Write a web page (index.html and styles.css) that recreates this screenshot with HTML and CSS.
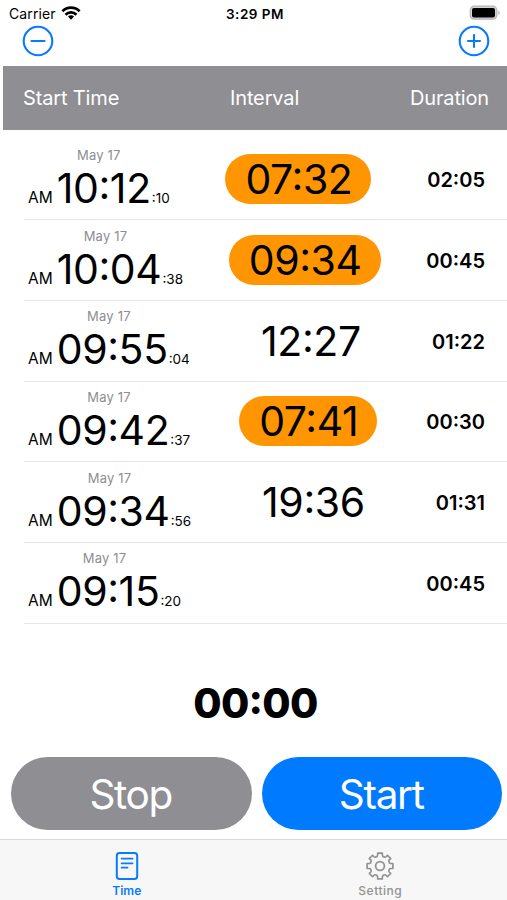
FILE: index.html
```html
<!DOCTYPE html>
<html lang="en">

<head>
    <meta charset="UTF-8">
    <meta name="viewport" content="width=device-width, initial-scale=1.0">
    <title>Interval Timer</title>
    <link rel="stylesheet" href="styles.css">
</head>

<body>
    <div class="status-bar">
        <div class="carrier">
            <span>Carrier</span>
            <svg width="20" height="14" viewBox="0 0 20 14">
                <g fill="none" stroke="#000" stroke-width="2.7">
                    <path d="M1.4 5.2a12.2 12.2 0 0 1 17.2 0" />
                    <path d="M4.5 8.7a7.8 7.8 0 0 1 11 0" />
                </g>
                <path d="M10 13.8l-3-3.2a4.2 4.2 0 0 1 6 0z" />
            </svg>
        </div>
        <div class="clock">3:29 PM</div>
        <div class="battery">
            <svg width="32" height="16" viewBox="0 0 32 16">
                <rect x="1.2" y="1.2" width="26.6" height="13" rx="4" fill="#d4d4d4" stroke="#b5b5b5" stroke-width="1.2" />
                <rect x="3" y="3" width="23" height="9.4" rx="2" />
                <path d="M29.3 5.2q3 2.5 0 5z" fill="#b5b5b5" />
            </svg>
        </div>
    </div>

    <div class="toolbar">
        <svg width="32" height="32" viewBox="0 0 32 32">
            <circle cx="16" cy="16" r="14.3" />
            <path d="M9.5 16h13" />
        </svg>
        <svg width="32" height="32" viewBox="0 0 32 32">
            <circle cx="16" cy="16" r="14.3" />
            <path d="M10 16h12M16 10v12" />
        </svg>
    </div>

    <div class="list-header">
        <span>Start Time</span>
        <span>Interval</span>
        <span>Duration</span>
    </div>

    <ul class="list">
        <li class="row">
            <div class="start">
                <div class="date">May 17</div>
                <div class="time"><span class="ampm">AM</span><span class="big">10:12</span><span class="sec">:10</span></div>
            </div>
            <div class="interval pill">07:32</div>
            <div class="duration">02:05</div>
        </li>
        <li class="row">
            <div class="start">
                <div class="date">May 17</div>
                <div class="time"><span class="ampm">AM</span><span class="big">10:04</span><span class="sec">:38</span></div>
            </div>
            <div class="interval pill">09:34</div>
            <div class="duration">00:45</div>
        </li>
        <li class="row">
            <div class="start">
                <div class="date">May 17</div>
                <div class="time"><span class="ampm">AM</span><span class="big">09:55</span><span class="sec">:04</span></div>
            </div>
            <div class="interval">12:27</div>
            <div class="duration">01:22</div>
        </li>
        <li class="row">
            <div class="start">
                <div class="date">May 17</div>
                <div class="time"><span class="ampm">AM</span><span class="big">09:42</span><span class="sec">:37</span></div>
            </div>
            <div class="interval pill">07:41</div>
            <div class="duration">00:30</div>
        </li>
        <li class="row">
            <div class="start">
                <div class="date">May 17</div>
                <div class="time"><span class="ampm">AM</span><span class="big">09:34</span><span class="sec">:56</span></div>
            </div>
            <div class="interval">19:36</div>
            <div class="duration">01:31</div>
        </li>
        <li class="row">
            <div class="start">
                <div class="date">May 17</div>
                <div class="time"><span class="ampm">AM</span><span class="big">09:15</span><span class="sec">:20</span></div>
            </div>
            <div class="duration">00:45</div>
        </li>
    </ul>

    <div class="timer">00:00</div>

    <div class="buttons">
        <button class="btn stop">Stop</button>
        <button class="btn go">Start</button>
    </div>

    <div class="tab-bar">
        <div class="tab active">
            <svg width="30" height="30" viewBox="-15 -15 30 30">
                <rect x="-10.2" y="-13" width="20.4" height="26" rx="2.8" stroke-width="2" />
                <path d="M-5.4-7.4h11M-5.4-2.7h11M-5.4 1.6h6" stroke-width="1.7" />
            </svg>
            <span>Time</span>
        </div>
        <div class="tab">
            <svg width="30" height="30" viewBox="-15 -15 30 30">
                <path stroke-width="1.7" d="M9.6-2.8 Q10-2.3 12.9-2.3V2.3Q10 2.3 9.6 2.8L8.8 4.8Q8.5 5.5 10.7 7.5L7.5 10.7Q5.5 8.5 4.8 8.8L2.8 9.6Q2.3 10 2.3 12.9H-2.3Q-2.3 10-2.8 9.6L-4.8 8.8Q-5.5 8.5-7.5 10.7L-10.7 7.5Q-8.5 5.5-8.8 4.8L-9.6 2.8Q-10 2.3-12.9 2.3V-2.3Q-10-2.3-9.6-2.8L-8.8-4.8Q-8.5-5.5-10.7-7.5L-7.5-10.7Q-5.5-8.5-4.8-8.8L-2.8-9.6Q-2.3-10-2.3-12.9H2.3Q2.3-10 2.8-9.6L4.8-8.8Q5.5-8.5 7.5-10.7L10.7-7.5Q8.5-5.5 8.8-4.8Z" />
                <circle r="4.4" stroke-width="1.8" />
            </svg>
            <span>Setting</span>
        </div>
    </div>
</body>

</html>
```

FILE: styles.css
```css
* {
    box-sizing: border-box;
}

body {
    margin: 0;
    height: 900px;
    display: flex;
    flex-direction: column;
    background: #fff;
    color: #000;
    font-family: Inter, "Liberation Sans", sans-serif;
    overflow: hidden;
}

.status-bar {
    display: grid;
    grid-template-columns: 1fr auto 1fr;
    align-items: center;
    height: 25px;
    padding: 2px 6px 0 9px;
    font-size: 14px;
}

.carrier {
    display: flex;
    align-items: center;
    gap: 5px;
    letter-spacing: 0.1px;
}

.carrier svg {
    margin-top: -2px;
}

.clock {
    font-weight: 600;
    font-size: 13.5px;
    letter-spacing: 0.5px;
}

.battery {
    display: flex;
    justify-content: flex-end;
}

.battery svg {
    margin-top: -1px;
}

.toolbar {
    display: flex;
    justify-content: space-between;
    height: 41px;
    padding: 0 17px 0 22px;
}

.toolbar svg {
    fill: none;
    stroke: #087aff;
    stroke-width: 2.1;
    stroke-linecap: round;
}

.list-header {
    display: flex;
    justify-content: space-between;
    align-items: center;
    height: 63.5px;
    margin-left: 3px;
    padding: 0 18px 0 20px;
    background: #8e8e93;
    color: #fff;
    font-size: 20px;
    letter-spacing: -0.15px;
}

.list {
    list-style: none;
    margin: 10px 0 0 24px;
    padding: 0;
}

.row {
    display: flex;
    justify-content: space-between;
    align-items: center;
    height: 80.7px;
    padding: 0 22px 0 4px;
    border-bottom: 1.5px solid #e6e6e8;
}

.start {
    display: flex;
    flex-direction: column;
    align-items: center;
    padding-top: 10px;
}

.date {
    color: #8e8e93;
    font-size: 13px;
    line-height: 17px;
    letter-spacing: 0.2px;
}

.time {
    display: flex;
    align-items: baseline;
    line-height: 48px;
}

.ampm {
    margin-right: 4px;
    font-size: 15.5px;
}

/* "case" lifts the colon to the middle of the digits */
.big,
.interval {
    font-size: 41px;
    letter-spacing: -0.4px;
    font-feature-settings: "case";
}

.sec {
    margin-left: 1px;
    font-size: 13.5px;
}

.interval {
    line-height: 50px;
}

.pill {
    padding: 0 19px 0 20px;
    border-radius: 25px;
    background: #ff9500;
}

.duration {
    padding-top: 2px;
    font-size: 20px;
    font-weight: 600;
    font-feature-settings: "case";
}

.timer {
    height: 133px;
    padding-top: 12px;
    font-size: 41px;
    font-weight: 800;
    line-height: 134px;
    letter-spacing: -0.7px;
    text-align: center;
    padding-left: 4px;
    font-feature-settings: "case";
}

.buttons {
    display: flex;
    gap: 10px;
    height: 73.5px;
    padding: 0 5px 0 11px;
}

.btn {
    flex: 1;
    padding: 2px 1px 0 0;
    border: none;
    border-radius: 37px;
    color: #fff;
    font-family: inherit;
    font-size: 40.5px;
    letter-spacing: -1.3px;
}

.stop {
    background: #8e8e93;
}

.go {
    background: #007aff;
}

.tab-bar {
    display: flex;
    height: 61px;
    margin-top: auto;
    padding-top: 11px;
    border-top: 1px solid #d9d9d9;
    background: #f7f7f7;
}

.tab {
    flex: 1;
    display: flex;
    flex-direction: column;
    align-items: center;
    color: #929292;
    font-size: 12px;
    font-weight: 500;
    letter-spacing: 0.5px;
}

.tab span {
    line-height: 20px;
}

.tab svg {
    flex-shrink: 0;
    fill: none;
    stroke: currentColor;
    stroke-linecap: round;
    stroke-linejoin: round;
}

.active {
    color: #087aff;
}

.active span {
    font-weight: 600;
    letter-spacing: 0;
}
```
